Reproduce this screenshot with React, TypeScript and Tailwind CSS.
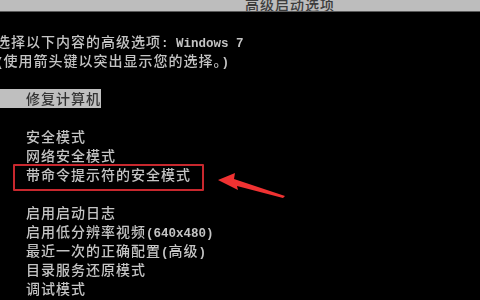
import React from "react";

const A = ({ children }: { children: React.ReactNode }) => (
  <span className="font-['Liberation_Mono',monospace] font-bold text-[12.5px] tracking-[0px]">{children}</span>
);

const Line = ({ children, indent = false, hl = false }: { children?: React.ReactNode; indent?: boolean; hl?: boolean }) => (
  <div className="h-[19px] leading-[19px] whitespace-nowrap flex">
    <div className={hl ? "bg-[#bfbfbf] text-[#333333] pl-[30px]" : indent ? "pl-[30px]" : ""}>{children ?? "\u00a0"}</div>
  </div>
);

export default function App() {
  return (
    <div className="relative w-[480px] h-[300px] overflow-hidden bg-black font-['Noto_Sans_CJK_SC',sans-serif] font-medium text-[14px] tracking-[1px] text-[#c4c4c4]">
      <div className="h-[12px] bg-[#bdbdbd] border-b border-[#5a5a5a] overflow-hidden">
        <div className="ml-[245px] -mt-[4px] leading-[16px] text-[#3c3c3c] whitespace-nowrap">高级启动选项</div>
      </div>
      <div className="pt-[20px] -ml-[4px] blur-[0.4px]">
        <Line>
          选择以下内容的高级选项<A>: Windows 7</A>
        </Line>
        <Line>
          <A>(</A>使用箭头键以突出显示您的选择。<A>)</A>
        </Line>
        <Line />
        <Line hl>修复计算机</Line>
        <Line />
        <Line indent>安全模式</Line>
        <Line indent>网络安全模式</Line>
        <Line indent>带命令提示符的安全模式</Line>
        <Line />
        <Line indent>启用启动日志</Line>
        <Line indent>
          启用低分辨率视频<A>(640x480)</A>
        </Line>
        <Line indent>
          最近一次的正确配置<A>(</A>高级<A>)</A>
        </Line>
        <Line indent>目录服务还原模式</Line>
        <Line indent>调试模式</Line>
      </div>
      <div className="absolute left-[13px] top-[164px] w-[191px] h-[27px] border-2 border-[#c8282e] rounded-[1px]" />
      <svg className="absolute left-0 top-0 pointer-events-none" width="480" height="300" viewBox="0 0 480 300">
        <polygon points="218,180 235,173 234,179 285,196 283,198 237,186 238,190" fill="#f03232" />
      </svg>
    </div>
  );
}
